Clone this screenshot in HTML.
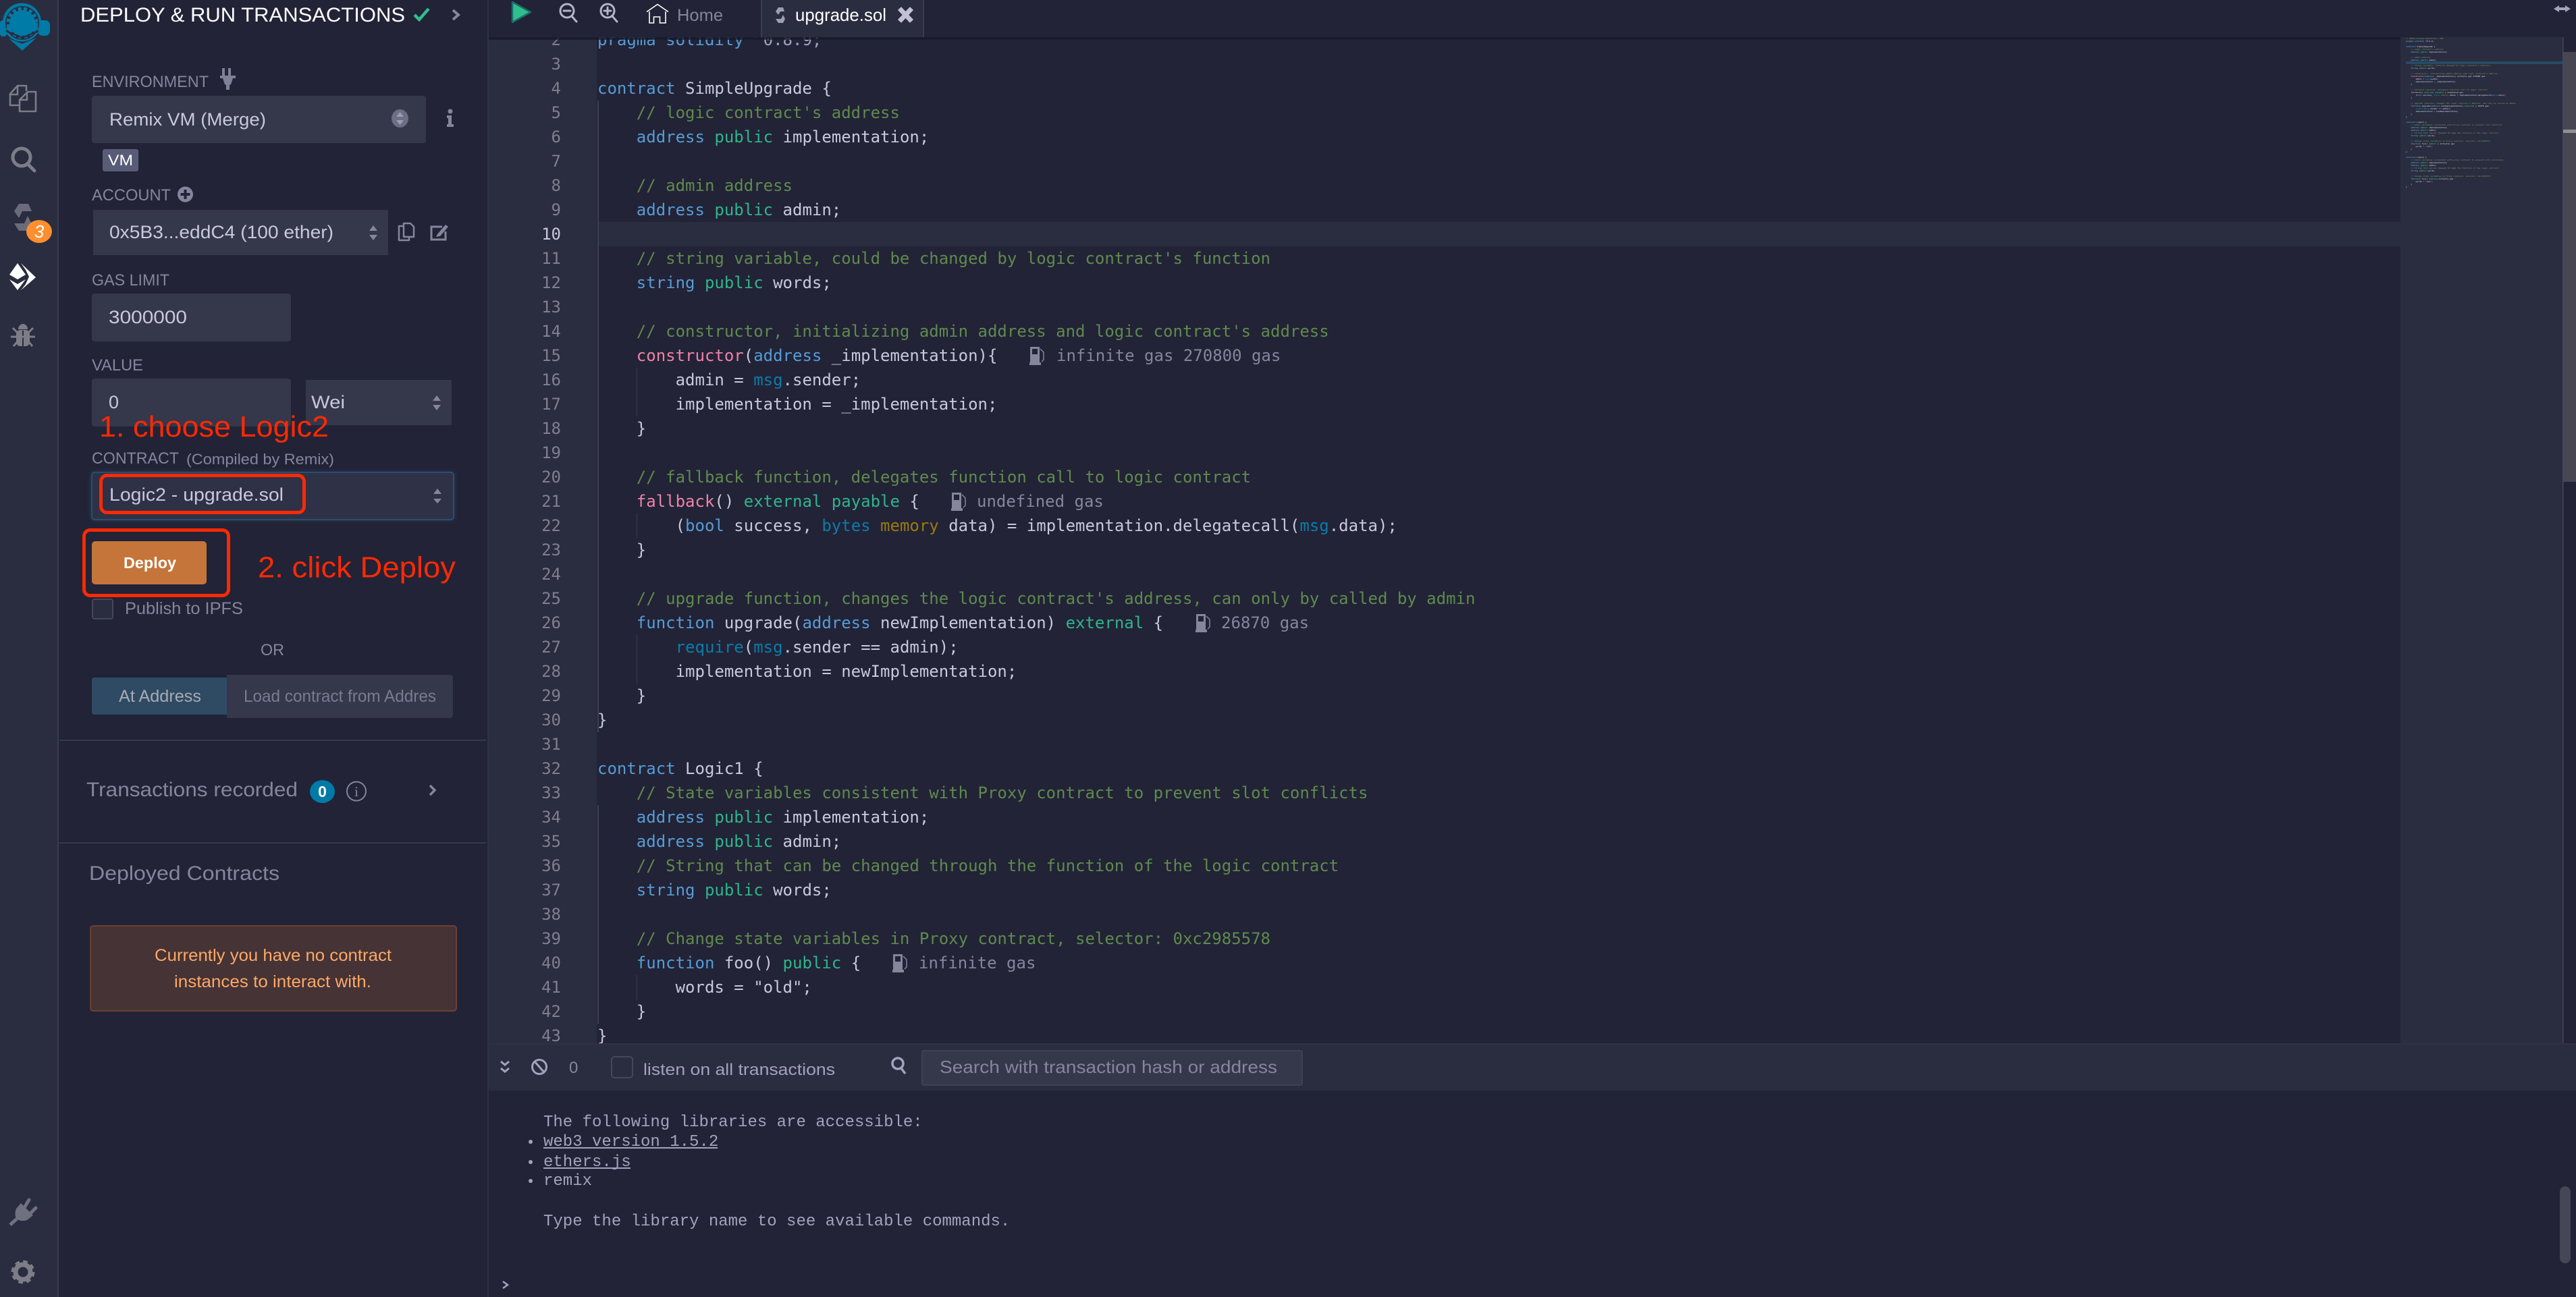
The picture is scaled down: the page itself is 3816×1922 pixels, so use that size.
<!DOCTYPE html>
<html lang="en"><head><meta charset="utf-8"><title>Remix IDE - Deploy &amp; Run Transactions</title>
<style>
html,body{margin:0;padding:0;background:#222336;width:3816px;height:1922px;overflow:hidden}
svg{display:block}
text{white-space:pre;font-family:"Liberation Sans",sans-serif}
.l{fill:#85869c;font-size:24px}
.v{fill:#c8c9dc;font-size:27px}
.code text{font-family:"DejaVu Sans Mono",monospace;font-size:24px;fill:#c8c9dc}
.num text{font-family:"DejaVu Sans Mono",monospace;font-size:24px;fill:#7e808e;text-anchor:end}
.mini text{font-family:"DejaVu Sans Mono",monospace;font-size:3px;font-weight:bold;fill:#b4b5c8}
.c{fill:#5f8a4e}.k{fill:#569cd6}.t{fill:#2fb48c}.p{fill:#ee82a8}.m{fill:#0b7cab}.o{fill:#9a7a10}
.code text.g,.g{fill:#85869c}
.term text{font-family:"Liberation Mono",monospace;font-size:24px;fill:#a2a3bd}
.mini text.c{fill:#5f8a4e}.mini text.k{fill:#569cd6}
</style></head><body>
<svg xmlns="http://www.w3.org/2000/svg" width="3816" height="1922" viewBox="0 0 3816 1922">
<defs><clipPath id="ed"><rect x="724" y="55" width="2840" height="1491"/></clipPath>
<filter id="bl" x="-10%" y="-30%" width="120%" height="160%"><feGaussianBlur stdDeviation="4"/></filter></defs>
<rect width="3816" height="1922" fill="#222336"/>
<!-- icon panel -->
<rect width="85" height="1922" fill="#2a2c3f"/><rect x="85" width="2" height="1922" fill="#3a3c50"/>
<rect x="722" width="2" height="1922" fill="#2e3044"/>
<!-- logo -->
<g fill="#007aa6">
<rect x="0" y="30" width="10" height="24" rx="4"/><rect x="56" y="30" width="18" height="23" rx="7"/>
<circle cx="32.5" cy="33" r="28.5"/>
<circle cx="33" cy="34" r="25" fill="#2a2c3f"/>
<circle cx="33" cy="34" r="19"/>
<circle cx="33" cy="34" r="21" fill="none" stroke="#007aa6" stroke-width="5" stroke-dasharray="5 3.4"/>
<polygon points="10,36 56,36 56,44 33,53 10,44"/>
<polygon points="13,57 33,65 54,56 33,75"/>
</g>
<polyline points="9,46 33,56 57,46" fill="none" stroke="#2a2c3f" stroke-width="2.5"/>
<!-- files -->
<g fill="none" stroke="#7c7d86" stroke-width="2.6" stroke-linejoin="round">
<path d="M39 135V127H26L15 139V156H29M15 140H26V128"/>
<path d="M29 148L41 136H53V165H29ZM29 148H40V137"/>
</g>
<!-- search -->
<circle cx="32" cy="233" r="13" fill="none" stroke="#7c7d86" stroke-width="5"/><line x1="41" y1="243" x2="51" y2="253" stroke="#7c7d86" stroke-width="5" stroke-linecap="round"/>
<!-- solidity -->
<polygon points="21,313 28,302 42,302 47,313 33,313 28,323" fill="#6a6c7c"/>
<polygon points="21,331 36,331 41,320 47,332 42,342 28,342" fill="#6a6c7c"/>
<ellipse cx="58" cy="343" rx="19" ry="17" fill="#fd8f2e"/>
<text x="58" y="352" font-size="26" font-style="italic" fill="#fff" text-anchor="middle">3</text>
<!-- deploy -->
<g fill="#fff"><polygon points="14,407 26,390 33,400 38,407 26,414"/><polygon points="14,414 26,421 38,414 26,430"/><polygon points="31,390 53,411 31,430 38,421 43,410 38,400"/></g>
<!-- bug -->
<g fill="#7c7d86" stroke="none"><path d="M27 488a7 8 0 0 1 14 0z"/><rect x="24" y="489" width="20" height="24" rx="6"/></g>
<line x1="34" y1="490" x2="34" y2="514" stroke="#2a2c3f" stroke-width="2"/>
<g stroke="#7c7d86" stroke-width="3"><path d="M19 486l7 7M49 486l-7 7M16 499H52M20 513l6-7M48 513l-6-7" fill="none"/></g>
<!-- plug -->
<g stroke="#6f717f" fill="#6f717f"><line x1="15" y1="1815" x2="25" y2="1806" stroke-width="5"/><line x1="37" y1="1788" x2="43" y2="1778" stroke-width="5" stroke-linecap="round"/><line x1="44" y1="1799" x2="53" y2="1790" stroke-width="5" stroke-linecap="round"/><path d="M31 1783L49 1801L40 1808Q31 1811 24 1806Q21 1799 24 1791Z" stroke="none"/></g>
<!-- gear -->
<circle cx="34" cy="1885" r="11" fill="none" stroke="#7c7d86" stroke-width="7"/>
<circle cx="34" cy="1885" r="15" fill="none" stroke="#7c7d86" stroke-width="5" stroke-dasharray="6.5 5.3"/>

<!-- sidebar header -->
<text x="119" y="32" font-size="30" fill="#fff" textLength="481" lengthAdjust="spacingAndGlyphs">DEPLOY &amp; RUN TRANSACTIONS</text>
<polyline points="614,22 621,29 635,13" fill="none" stroke="#2fbf8d" stroke-width="4.5"/>
<polyline points="671,15 679,22 671,29" fill="none" stroke="#85869c" stroke-width="4"/>

<!-- environment -->
<text class="l" x="136" y="129" textLength="173" lengthAdjust="spacingAndGlyphs">ENVIRONMENT</text>
<path d="M329 101h4v11h5v-11h4v11h7v4h-4l-3 9-2 1v7h-5v-7l-2-1-3-9h-4v-4h3z" fill="#7e8199"/>
<rect x="136" y="142" width="495" height="70" rx="4" fill="#35374b"/>
<text class="v" x="162" y="186" textLength="232" lengthAdjust="spacingAndGlyphs">Remix VM (Merge)</text>
<ellipse cx="592.5" cy="175.5" rx="12.5" ry="13.5" fill="#6d6f84"/>
<polygon points="587,173 592.5,166 598,173" fill="#9b9db3"/><polygon points="587,178 592.5,185 598,178" fill="#9b9db3"/>
<g fill="#85869c"><circle cx="667" cy="165" r="3.5"/><path d="M662 171h7v13h3v4h-10v-4h2v-9h-2z"/></g>
<rect x="152" y="221" width="53" height="33" rx="3" fill="#595c76"/>
<text x="160" y="245" font-size="22" fill="#fff" textLength="37" lengthAdjust="spacingAndGlyphs">VM</text>

<!-- account -->
<text class="l" x="136" y="297" textLength="117" lengthAdjust="spacingAndGlyphs">ACCOUNT</text>
<circle cx="274.5" cy="288" r="11.5" fill="#85869c"/><path d="M274.5 281v14M267.5 288h14" stroke="#222336" stroke-width="4"/>
<rect x="138" y="311" width="437" height="67" fill="#35374b"/>
<text class="v" x="162" y="353" textLength="332" lengthAdjust="spacingAndGlyphs">0x5B3...eddC4 (100 ether)</text>
<polygon points="547,342 553,334 559,342" fill="#85869c"/><polygon points="547,348 553,356 559,348" fill="#85869c"/>
<g fill="none" stroke="#85869c" stroke-width="2.5" stroke-linejoin="round"><path d="M598 335h-7v21h15v-5"/><path d="M598 331h10l5 5v15h-15z"/></g>
<g fill="none" stroke="#85869c" stroke-width="3"><path d="M655 336h-16v19h21v-12"/></g><path d="M648 347l12-14 4 3-12 14-6 1z" fill="#85869c"/>

<!-- gas -->
<text class="l" x="136" y="423" textLength="115" lengthAdjust="spacingAndGlyphs">GAS LIMIT</text>
<rect x="136" y="435" width="295" height="71" rx="4" fill="#35374b"/>
<text class="v" x="161" y="479" textLength="116" lengthAdjust="spacingAndGlyphs">3000000</text>

<!-- value -->
<text class="l" x="136" y="549" textLength="76" lengthAdjust="spacingAndGlyphs">VALUE</text>
<rect x="136" y="561" width="295" height="71" rx="4" fill="#35374b"/>
<text class="v" x="161" y="605">0</text>
<rect x="453" y="563" width="216" height="67" fill="#35374b"/>
<text class="v" x="461" y="605" textLength="50" lengthAdjust="spacingAndGlyphs">Wei</text>
<polygon points="641,594 647,586 653,594" fill="#85869c"/><polygon points="641,600 647,608 653,600" fill="#85869c"/>

<!-- contract -->
<text class="l" x="136" y="687" textLength="129" lengthAdjust="spacingAndGlyphs">CONTRACT</text>
<text x="276" y="688" font-size="22" fill="#85869c" textLength="219" lengthAdjust="spacingAndGlyphs">(Compiled by Remix)</text>
<rect x="135" y="699" width="538" height="72" rx="4" fill="#2d5f80" opacity=".4" filter="url(#bl)"/>
<rect x="136" y="700" width="536" height="70" rx="4" fill="#2f3146" stroke="#28506c" stroke-width="2"/>
<text class="v" x="162" y="742" textLength="258" lengthAdjust="spacingAndGlyphs">Logic2 - upgrade.sol</text>
<polygon points="642,732 648,724 654,732" fill="#85869c"/><polygon points="642,739 648,746 654,739" fill="#85869c"/>
<rect x="149.500" y="704.500" width="301" height="55" rx="9" fill="none" stroke="#fc2a04" stroke-width="5"/>
<text x="147" y="647" font-size="44" fill="#fc2a04" textLength="340" lengthAdjust="spacingAndGlyphs">1. choose Logic2</text>

<!-- deploy btn -->
<rect x="124.500" y="785.500" width="214" height="97" rx="9" fill="none" stroke="#fc2a04" stroke-width="5"/>
<rect x="136" y="802" width="170" height="64" rx="5" fill="#c57539"/>
<text x="183" y="842" font-size="23" font-weight="bold" fill="#fff" textLength="78" lengthAdjust="spacingAndGlyphs">Deploy</text>
<text x="382" y="855.500" font-size="44" fill="#fc2a04" textLength="293" lengthAdjust="spacingAndGlyphs">2. click Deploy</text>

<rect x="137" y="888" width="30" height="29" rx="3" fill="#2a2c3f" stroke="#45475c" stroke-width="2"/>
<text x="185" y="910" font-size="25" fill="#85869c" textLength="175" lengthAdjust="spacingAndGlyphs">Publish to IPFS</text>
<text class="l" x="386" y="971" textLength="35" lengthAdjust="spacingAndGlyphs">OR</text>

<path d="M140 1004H336V1059H140a4 4 0 0 1-4-4V1008a4 4 0 0 1 4-4z" fill="#2f4b63"/>
<text x="176" y="1040" font-size="25" fill="#a8aab5" textLength="122" lengthAdjust="spacingAndGlyphs">At Address</text>
<path d="M336 1000H667a4 4 0 0 1 4 4V1060a4 4 0 0 1-4 4H336z" fill="#35374b"/>
<text x="361" y="1040" font-size="25" fill="#797b90" textLength="285" lengthAdjust="spacingAndGlyphs">Load contract from Addres</text>
<rect x="88" y="1096" width="632" height="2" fill="#36384c"/>

<!-- transactions -->
<text x="128" y="1180" font-size="30" fill="#85869c" textLength="313" lengthAdjust="spacingAndGlyphs">Transactions recorded</text>
<ellipse cx="477.500" cy="1173" rx="18.500" ry="17" fill="#007aa6"/>
<text x="477.500" y="1181" font-size="23" font-weight="bold" fill="#fff" text-anchor="middle">0</text>
<circle cx="528" cy="1172.500" r="14" fill="none" stroke="#85869c" stroke-width="2"/>
<text x="528" y="1180" font-size="21" fill="#85869c" text-anchor="middle" style="font-family:'Liberation Serif',serif">i</text>
<polyline points="637,1164 644,1171 637,1178" fill="none" stroke="#85869c" stroke-width="3.5"/>
<rect x="88" y="1248" width="632" height="2" fill="#36384c"/>
<text x="132" y="1304" font-size="30" fill="#85869c" textLength="282" lengthAdjust="spacingAndGlyphs">Deployed Contracts</text>
<rect x="134" y="1372" width="542" height="126" rx="4" fill="#453335" stroke="#6d3f35" stroke-width="2"/>
<text x="229" y="1424" font-size="25" fill="#ffa866" textLength="351" lengthAdjust="spacingAndGlyphs">Currently you have no contract</text>
<text x="258" y="1463" font-size="25" fill="#ffa866" textLength="292" lengthAdjust="spacingAndGlyphs">instances to interact with.</text>

<!-- editor backgrounds -->
<rect x="724" y="55" width="160" height="1491" fill="#2a2c3f"/>
<rect x="885" y="329" width="2671" height="36" fill="#2a2c3f"/>
<rect x="3556" y="55" width="240" height="1491" fill="#2a2c3f"/>
<rect x="3796" y="55" width="1.500" height="1491" fill="#46485a"/>
<rect x="3797" y="77" width="19" height="637" fill="#464752"/>
<rect x="3797" y="192" width="19" height="5" fill="#8f8f95"/>
<rect x="885" y="149" width="2" height="936" fill="#3d3f52"/>
<rect x="885" y="1193" width="2" height="324" fill="#3d3f52"/>
<g fill="#3a3c50"><rect x="943" y="545" width="1" height="72"/><rect x="943" y="761" width="1" height="36"/><rect x="943" y="941" width="1" height="72"/><rect x="943" y="1445" width="1" height="36"/></g>

<g clip-path="url(#ed)">
<g class="num">
<text x="831" y="67">2</text><text x="831" y="103">3</text><text x="831" y="139">4</text><text x="831" y="175">5</text><text x="831" y="211">6</text><text x="831" y="247">7</text><text x="831" y="283">8</text><text x="831" y="319">9</text><text x="831" y="355" style="fill:#c8c9dc">10</text><text x="831" y="391">11</text><text x="831" y="427">12</text><text x="831" y="463">13</text><text x="831" y="499">14</text><text x="831" y="535">15</text><text x="831" y="571">16</text><text x="831" y="607">17</text><text x="831" y="643">18</text><text x="831" y="679">19</text><text x="831" y="715">20</text><text x="831" y="751">21</text><text x="831" y="787">22</text><text x="831" y="823">23</text><text x="831" y="859">24</text><text x="831" y="895">25</text><text x="831" y="931">26</text><text x="831" y="967">27</text><text x="831" y="1003">28</text><text x="831" y="1039">29</text><text x="831" y="1075">30</text><text x="831" y="1111">31</text><text x="831" y="1147">32</text><text x="831" y="1183">33</text><text x="831" y="1219">34</text><text x="831" y="1255">35</text><text x="831" y="1291">36</text><text x="831" y="1327">37</text><text x="831" y="1363">38</text><text x="831" y="1399">39</text><text x="831" y="1435">40</text><text x="831" y="1471">41</text><text x="831" y="1507">42</text><text x="831" y="1543">43</text>
</g>
<g class="code">
<text x="885" y="67"><tspan class="k">pragma</tspan> <tspan class="k">solidity</tspan> <tspan fill="#a2a3bd">^0.8.9;</tspan></text>
<text x="885" y="139"><tspan class="k">contract</tspan> SimpleUpgrade {</text>
<text x="885" y="175">    <tspan class="c">// logic contract's address</tspan></text>
<text x="885" y="211">    <tspan class="k">address</tspan> <tspan class="t">public</tspan> implementation;</text>
<text x="885" y="283">    <tspan class="c">// admin address</tspan></text>
<text x="885" y="319">    <tspan class="k">address</tspan> <tspan class="t">public</tspan> admin;</text>
<text x="885" y="391">    <tspan class="c">// string variable, could be changed by logic contract's function</tspan></text>
<text x="885" y="427">    <tspan class="k">string</tspan> <tspan class="t">public</tspan> words;</text>
<text x="885" y="499">    <tspan class="c">// constructor, initializing admin address and logic contract's address</tspan></text>
<text x="885" y="535">    <tspan class="p">constructor</tspan>(<tspan class="k">address</tspan> _implementation){</text>
<text class="g" x="1565" y="535">infinite gas 270800 gas</text>
<text x="885" y="571">        admin = <tspan class="m">msg</tspan>.sender;</text>
<text x="885" y="607">        implementation = _implementation;</text>
<text x="885" y="643">    }</text>
<text x="885" y="715">    <tspan class="c">// fallback function, delegates function call to logic contract</tspan></text>
<text x="885" y="751">    <tspan class="p">fallback</tspan>() <tspan class="t">external</tspan> <tspan class="t">payable</tspan> {</text>
<text class="g" x="1447" y="751">undefined gas</text>
<text x="885" y="787">        (<tspan class="k">bool</tspan> success, <tspan class="m">bytes</tspan> <tspan class="o">memory</tspan> data) = implementation.delegatecall(<tspan class="m">msg</tspan>.data);</text>
<text x="885" y="823">    }</text>
<text x="885" y="895">    <tspan class="c">// upgrade function, changes the logic contract's address, can only by called by admin</tspan></text>
<text x="885" y="931">    <tspan class="k">function</tspan> upgrade(<tspan class="k">address</tspan> newImplementation) <tspan class="t">external</tspan> {</text>
<text class="g" x="1809" y="931">26870 gas</text>
<text x="885" y="967">        <tspan class="m">require</tspan>(<tspan class="m">msg</tspan>.sender == admin);</text>
<text x="885" y="1003">        implementation = newImplementation;</text>
<text x="885" y="1039">    }</text>
<text x="885" y="1075">}</text>
<text x="885" y="1147"><tspan class="k">contract</tspan> Logic1 {</text>
<text x="885" y="1183">    <tspan class="c">// State variables consistent with Proxy contract to prevent slot conflicts</tspan></text>
<text x="885" y="1219">    <tspan class="k">address</tspan> <tspan class="t">public</tspan> implementation;</text>
<text x="885" y="1255">    <tspan class="k">address</tspan> <tspan class="t">public</tspan> admin;</text>
<text x="885" y="1291">    <tspan class="c">// String that can be changed through the function of the logic contract</tspan></text>
<text x="885" y="1327">    <tspan class="k">string</tspan> <tspan class="t">public</tspan> words;</text>
<text x="885" y="1399">    <tspan class="c">// Change state variables in Proxy contract, selector: 0xc2985578</tspan></text>
<text x="885" y="1435">    <tspan class="k">function</tspan> foo() <tspan class="t">public</tspan> {</text>
<text class="g" x="1361" y="1435">infinite gas</text>
<text x="885" y="1471">        words = "old";</text>
<text x="885" y="1507">    }</text>
<text x="885" y="1543">}</text>
</g>
<!-- gas pump icons -->
<g fill="#85869c">
<path d="M1526 514h14v23h2v4h-17v-4h1zM1529 517v8h8v-8z"/><path d="M1541 517l5 5v11l-3 3" fill="none" stroke="#85869c" stroke-width="1.500"/>
<path d="M1410 730h14v23h2v4h-17v-4h1zM1413 733v8h8v-8z"/><path d="M1425 733l5 5v11l-3 3" fill="none" stroke="#85869c" stroke-width="1.500"/>
<path d="M1772 910h14v23h2v4h-17v-4h1zM1775 913v8h8v-8z"/><path d="M1787 913l5 5v11l-3 3" fill="none" stroke="#85869c" stroke-width="1.500"/>
<path d="M1323 1414h14v23h2v4h-17v-4h1zM1326 1417v8h8v-8z"/><path d="M1338 1417l5 5v11l-3 3" fill="none" stroke="#85869c" stroke-width="1.500"/>
</g>
</g>
<!-- shadow under tabs -->
<rect x="724" y="55" width="2832" height="4" fill="#18192a" opacity=".8"/>

<!-- minimap -->
<rect x="3564" y="91" width="232" height="4" fill="#274a66"/>
<g class="mini">
<text class="c" x="3564" y="58">// SPDX-License-Identifier: MIT</text>
<text x="3564" y="62"><tspan class="k">pragma solidity</tspan> ^0.8.9;</text>
<text x="3564" y="70"><tspan class="k">contract</tspan> SimpleUpgrade {</text>
<text class="c" x="3564" y="74">    // logic contract's address</text>
<text x="3564" y="78">    <tspan class="k">address</tspan> <tspan class="t">public</tspan> implementation;</text>
<text class="c" x="3564" y="86">    // admin address</text>
<text x="3564" y="90">    <tspan class="k">address</tspan> <tspan class="t">public</tspan> admin;</text>
<text class="c" x="3564" y="98">    // string variable, could be changed by logic contract's function</text>
<text x="3564" y="102">    <tspan class="k">string</tspan> <tspan class="t">public</tspan> words;</text>
<text class="c" x="3564" y="110">    // constructor, initializing admin address and logic contract's address</text>
<text x="3564" y="114">    <tspan class="p">constructor</tspan>(<tspan class="k">address</tspan> _implementation){ infinite gas 270800 gas</text>
<text x="3564" y="118">        admin = <tspan class="m">msg</tspan>.sender;</text>
<text x="3564" y="122">        implementation = _implementation;</text>
<text x="3564" y="126">    }</text>
<text class="c" x="3564" y="134">    // fallback function, delegates function call to logic contract</text>
<text x="3564" y="138">    <tspan class="p">fallback</tspan>() <tspan class="t">external payable</tspan> { undefined gas</text>
<text x="3564" y="142">        (<tspan class="k">bool</tspan> success, <tspan class="m">bytes</tspan> <tspan class="o">memory</tspan> data) = implementation.delegatecall(<tspan class="m">msg</tspan>.data);</text>
<text x="3564" y="146">    }</text>
<text class="c" x="3564" y="154">    // upgrade function, changes the logic contract's address, can only by called by admin</text>
<text x="3564" y="158">    <tspan class="k">function</tspan> upgrade(<tspan class="k">address</tspan> newImplementation) <tspan class="t">external</tspan> { 26870 gas</text>
<text x="3564" y="162">        <tspan class="m">require</tspan>(<tspan class="m">msg</tspan>.sender == admin);</text>
<text x="3564" y="166">        implementation = newImplementation;</text>
<text x="3564" y="170">    }</text>
<text x="3564" y="174">}</text>
<text x="3564" y="182"><tspan class="k">contract</tspan> Logic1 {</text>
<text class="c" x="3564" y="186">    // State variables consistent with Proxy contract to prevent slot conflicts</text>
<text x="3564" y="190">    <tspan class="k">address</tspan> <tspan class="t">public</tspan> implementation;</text>
<text x="3564" y="194">    <tspan class="k">address</tspan> <tspan class="t">public</tspan> admin;</text>
<text class="c" x="3564" y="198">    // String that can be changed through the function of the logic contract</text>
<text x="3564" y="202">    <tspan class="k">string</tspan> <tspan class="t">public</tspan> words;</text>
<text class="c" x="3564" y="210">    // Change state variables in Proxy contract, selector: 0xc2985578</text>
<text x="3564" y="214">    <tspan class="k">function</tspan> foo() <tspan class="t">public</tspan> { infinite gas</text>
<text x="3564" y="218">        words = <tspan class="p">"old"</tspan>;</text>
<text x="3564" y="222">    }</text>
<text x="3564" y="226">}</text>
<text x="3564" y="234"><tspan class="k">contract</tspan> Logic2 {</text>
<text class="c" x="3564" y="238">    // State variables consistent with proxy contract to prevent slot collisions</text>
<text x="3564" y="242">    <tspan class="k">address</tspan> <tspan class="t">public</tspan> implementation;</text>
<text x="3564" y="246">    <tspan class="k">address</tspan> <tspan class="t">public</tspan> admin;</text>
<text class="c" x="3564" y="250">    // String that can be changed through the function of the logic contract</text>
<text x="3564" y="254">    <tspan class="k">string</tspan> <tspan class="t">public</tspan> words;</text>
<text class="c" x="3564" y="262">    // Change state variables in Proxy contract, selector: 0xc2985578</text>
<text x="3564" y="266">    <tspan class="k">function</tspan> foo() <tspan class="t">public</tspan>{ infinite gas</text>
<text x="3564" y="270">        words = <tspan class="p">"new"</tspan>;</text>
<text x="3564" y="274">    }</text>
<text x="3564" y="278">}</text>
</g>

<!-- top bar -->
<polygon points="759,3 786,18 759,33" fill="#2fbf8d" stroke="#1c6d6a" stroke-width="2.500" stroke-linejoin="round"/>
<g fill="none" stroke="#b4b5c8" stroke-width="3"><circle cx="840" cy="16" r="10"/><path d="M847 24l7 8M835 16h10" stroke-linecap="round"/><circle cx="900" cy="16" r="10"/><path d="M907 24l7 8M895 16h10M900 11v10" stroke-linecap="round"/></g>
<g fill="none" stroke="#fff" stroke-width="1.600"><polyline points="958,17.500 974,6.500 990,17.500"/><path d="M962 17V34H968.500V25H977.500V34H986V17"/></g>
<text x="1003" y="31" font-size="25" fill="#85869c" textLength="68" lengthAdjust="spacingAndGlyphs">Home</text>
<rect x="1128" y="0" width="240" height="55" fill="#2a2c3f"/><rect x="1127" width="2" height="55" fill="#3a3c50"/><rect x="1367" width="2" height="55" fill="#3a3c50"/>
<g fill="#9c9eb3"><polygon points="1149,17 1153,11 1160,11 1162,17 1156,17 1153,22"/><polygon points="1149,28 1157,28 1160,22 1163,28 1160,34 1153,34"/></g>
<text x="1178" y="31" font-size="26" fill="#fff" textLength="135" lengthAdjust="spacingAndGlyphs">upgrade.sol</text>
<path d="M1332.500 12.500l18 19M1350.500 12.500l-18 19" stroke="#c0c1d4" stroke-width="7"/>
<path d="M3783 13l8-5v3h9v-3l8 5-8 5v-3h-9v3z" fill="#a2a3bd"/>

<!-- terminal bar -->
<rect x="724" y="1546" width="3092" height="70" fill="#2a2c3f"/><rect x="724" y="1546" width="3092" height="2" fill="#2f3246"/>
<g fill="none" stroke="#a2a3bd" stroke-width="3"><path d="M742 1573l6 5 6-5M742 1583l6 5 6-5"/><circle cx="799" cy="1581" r="10.500"/><path d="M792 1573l14 16"/></g>
<text x="843" y="1590" font-size="24" fill="#85869c">0</text>
<rect x="906" y="1566" width="31" height="31" rx="4" fill="#2a2c3f" stroke="#45475c" stroke-width="2"/>
<text x="953" y="1593" font-size="24" fill="#a2a3bd" textLength="284" lengthAdjust="spacingAndGlyphs">listen on all transactions</text>
<circle cx="1330" cy="1576" r="8" fill="none" stroke="#a2a3bd" stroke-width="3.500"/><path d="M1335 1583l6 8" stroke="#a2a3bd" stroke-width="3.500"/>
<rect x="1366" y="1557" width="563" height="51" rx="3" fill="#35374b" stroke="#3f4157" stroke-width="2"/>
<text x="1392" y="1590" font-size="26" fill="#85869c" textLength="500" lengthAdjust="spacingAndGlyphs">Search with transaction hash or address</text>

<!-- terminal -->
<g class="term">
<text x="805" y="1669">The following libraries are accessible:</text>
<text x="805" y="1698">web3 version 1.5.2</text>
<text x="805" y="1728">ethers.js</text>
<text x="805" y="1756">remix</text>
<text x="805" y="1816">Type the library name to see available commands.</text>
</g>
<g fill="#a2a3bd"><circle cx="786" cy="1692" r="3"/><circle cx="786" cy="1722" r="3"/><circle cx="786" cy="1750" r="3"/>
<rect x="805" y="1700" width="258" height="2"/><rect x="805" y="1730" width="129" height="2"/></g>
<polyline points="745,1899 752,1904 745,1909" fill="none" stroke="#a2a3bd" stroke-width="2.500"/>
<rect x="3792" y="1758" width="16" height="114" rx="8" fill="#444756"/>
</svg>
</body></html>
